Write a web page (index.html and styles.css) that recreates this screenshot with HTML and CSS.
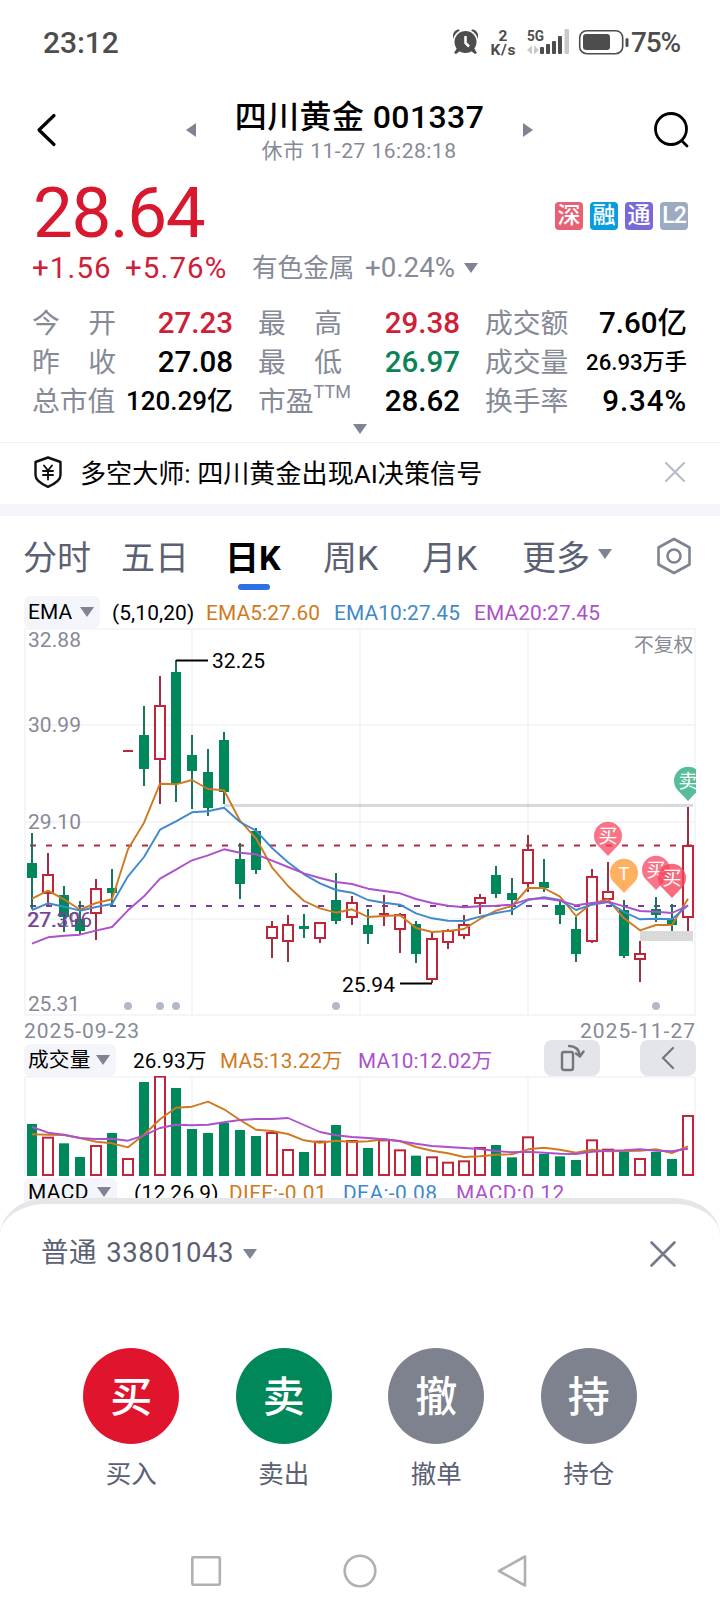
FILE: index.html
```html
<!DOCTYPE html>
<html lang="zh-CN">
<head>
<meta charset="utf-8">
<meta name="viewport" content="width=device-width, initial-scale=1">
<title>四川黄金 001337</title>
<link rel="stylesheet" href="styles.css">
</head>
<body>

<div class="status">
  <span class="clock">23:12</span>
  <svg class="status-icons" width="190" height="40" viewBox="446 22 190 40">
    <g fill="#4d4d4d">
      <circle cx="465.500" cy="42" r="11"/>
      <path d="M453 39a14 14 0 0 1 7-8.500l-2-1.300q-5 2-5 6zM478 39a14 14 0 0 0-7-8.500l2-1.300q5 2 5 6z"/>
      <path d="M457 48l-3 5 2 1 4-3zM474 48l3 5-2 1-4-3z"/>
      <text class="net" x="503" y="40.500" text-anchor="middle">2</text>
      <text class="net" x="503" y="55" text-anchor="middle" textLength="25">K/s</text>
      <text class="net" x="527" y="41" textLength="17" lengthAdjust="spacingAndGlyphs">5G</text>
      <rect x="540" y="47" width="4" height="7" rx="1"/>
      <rect x="546" y="44" width="4" height="10" rx="1"/>
      <rect x="552" y="41" width="4" height="13" rx="1"/>
      <rect x="558" y="36" width="4" height="18" rx="1"/>
      <rect x="583" y="34" width="27" height="16" rx="3"/>
      <rect x="625.500" y="38" width="3" height="9" rx="1.500"/>
    </g>
    <path d="M465.500 36v7l3.500 3.500" fill="none" stroke="#fff" stroke-width="2.500"/>
    <g fill="#c9c9c9">
      <rect x="564.500" y="29" width="4.500" height="25" rx="1"/>
      <path d="M527 50l5-4.500v9zM534 45.500l5 4.500-5 4.500z"/>
    </g>
    <rect x="579.700" y="30.700" width="43" height="23" rx="7" fill="none" stroke="#4d4d4d" stroke-width="1.600"/>
  </svg>
  <span class="battery">75%</span>
</div>

<div class="header">
  <svg class="back" width="24" height="36" viewBox="0 0 24 36"><path d="M19 3.500L4 18l15 14.500" fill="none" stroke="#000" stroke-width="3.200" stroke-linecap="round" stroke-linejoin="round"/></svg>
  <svg class="prev" width="10" height="14"><path d="M10 0v14L0 7z" fill="#7f8492"/></svg>
  <div class="title">
    <h1>四川黄金 001337</h1>
    <p>休市 11-27 16:28:18</p>
  </div>
  <svg class="next" width="10" height="14"><path d="M0 0v14l10-7z" fill="#7f8492"/></svg>
  <svg class="search" width="38" height="38" viewBox="0 0 38 38"><g fill="none" stroke="#000" stroke-width="2.800" stroke-linecap="round"><circle cx="18" cy="18" r="15.500"/><path d="M29 30l5 5"/></g></svg>
</div>

<div class="price-row">
  <span class="price">28.64</span>
  <div class="tags">
    <span class="tag sz">深</span>
    <span class="tag rong">融</span>
    <span class="tag tong">通</span>
    <span class="tag l2">L2</span>
  </div>
</div>

<div class="change-row">
  <span class="red">+1.56</span>
  <span class="red">+5.76%</span>
  <span class="sector">有色金属</span>
  <span class="sector-pct">+0.24%</span>
  <i class="arrow"></i>
</div>

<div class="stats">
  <span class="label"><b>今</b><b>开</b></span><span class="val red">27.23</span>
  <span class="label"><b>最</b><b>高</b></span><span class="val red">29.38</span>
  <span class="label">成交额</span><span class="val">7.60亿</span>

  <span class="label"><b>昨</b><b>收</b></span><span class="val">27.08</span>
  <span class="label"><b>最</b><b>低</b></span><span class="val green">26.97</span>
  <span class="label">成交量</span><span class="val small">26.93万手</span>

  <span class="label">总市值</span><span class="val mid">120.29亿</span>
  <span class="label ttm">市盈<sup>TTM</sup></span><span class="val">28.62</span>
  <span class="label">换手率</span><span class="val pct">9.34%</span>
</div>
<div class="more"><i class="arrow"></i></div>

<div class="notice">
  <svg width="30" height="34" viewBox="0 0 30 34"><g fill="none" stroke="#111" stroke-linecap="round" stroke-linejoin="round"><path d="M15 2.500L27.500 7v13c0 5-6 9-12.500 11.800C8.500 29 2.500 25 2.500 20V7z" stroke-width="2.400"/><path d="M11 10.500l4 5 4-5M10 16h10M10 20h10M15 16v8.500" stroke-width="1.900"/></g></svg>
  <span>多空大师: 四川黄金出现AI决策信号</span>
  <svg width="22" height="22" viewBox="0 0 22 22"><path d="M2 2l18 18M20 2L2 20" stroke="#b7bcc9" stroke-width="2.200" stroke-linecap="round"/></svg>
</div>

<div class="tabs">
  <span>分时</span>
  <span>五日</span>
  <span class="active">日K</span>
  <span>周K</span>
  <span>月K</span>
  <span>更多</span>
  <i class="arrow"></i>
  <svg width="36" height="38" viewBox="0 0 36 38"><g fill="none" stroke="#7f8492" stroke-width="2.600" stroke-linejoin="round"><path d="M18 2l15.500 8.500v17L18 36 2.500 27.500v-17z"/><circle cx="18" cy="19" r="6.500"/></g></svg>
</div>

<div class="legend ema">
  <span class="pill">EMA<i class="arrow"></i></span>
  <span>(5,10,20)</span>
  <span class="orange">EMA5:27.60</span>
  <span class="blue">EMA10:27.45</span>
  <span class="purple">EMA20:27.45</span>
</div>
<svg id="kline" width="720" height="388" viewBox="0 628 720 388"></svg>
<div class="dates"><span>2025-09-23</span><span>2025-11-27</span></div>

<div class="legend vol">
  <span class="pill">成交量<i class="arrow"></i></span>
  <span>26.93万</span>
  <span class="orange">MA5:13.22万</span>
  <span class="purple">MA10:12.02万</span>
  <span class="btn"><svg width="26" height="28" viewBox="0 0 26 28"><g fill="none" stroke="#74767c" stroke-width="2.400" stroke-linecap="round" stroke-linejoin="round"><rect x="3" y="8" width="11" height="18" rx="2"/><path d="M10 2c6 0 10 3 11 10M17 9.500l4 3 3.500-5"/></g></svg></span>
  <span class="btn"><svg width="14" height="24" viewBox="0 0 14 24"><path d="M12 2L2 12l10 10" fill="none" stroke="#74767c" stroke-width="2.200" stroke-linecap="round"/></svg></span>
</div>
<svg id="volume" width="720" height="100" viewBox="0 1076 720 100"></svg>

<div class="legend macd">
  <span class="pill">MACD<i class="arrow"></i></span>
  <span>(12,26,9)</span>
  <span class="orange">DIFF:-0.01</span>
  <span class="blue">DEA:-0.08</span>
  <span class="purple">MACD:0.12</span>
</div>

<div class="sheet">
  <div class="account">
    <span>普通 33801043</span>
    <i class="arrow"></i>
    <svg width="28" height="28" viewBox="0 0 28 28"><path d="M2.500 2.500l23 23M25.500 2.500l-23 23" stroke="#74798a" stroke-width="2.600" stroke-linecap="round"/></svg>
  </div>
  <div class="actions">
    <div><span class="round buy">买</span>买入</div>
    <div><span class="round sell">卖</span>卖出</div>
    <div><span class="round">撤</span>撤单</div>
    <div><span class="round">持</span>持仓</div>
  </div>
  <svg class="nav" width="720" height="40" viewBox="0 1551 720 40">
    <g fill="none" stroke="#b0b0b0" stroke-width="2.600" stroke-linejoin="round">
      <rect x="192.300" y="1557.300" width="27.500" height="27.500" rx="1"/>
      <circle cx="360" cy="1571" r="15.300"/>
      <path d="M525 1556.500v29l-26-14.500z"/>
    </g>
  </svg>
</div>

<script src="chart.js"></script>
</body>
</html>
```

FILE: styles.css
```css
* { box-sizing: border-box; margin: 0; padding: 0; }

body {
  width: 720px; height: 1610px; overflow: hidden;
  display: flex; flex-direction: column;
  background: #fff; color: #000;
  font-family: Roboto, "Noto Sans CJK SC", sans-serif;
}
body > * { flex: none; }
svg { display: block; }
h1, b { font-weight: inherit; }

.red { color: #cf2037; }
.green { color: #0b8358; }
.orange { color: #cf7a20; }
.blue { color: #4089cc; }
.purple { color: #ad50cc; }

.arrow {
  display: block; width: 14px; height: 10px;
  background: #7f8492; clip-path: polygon(0 0, 100% 0, 50% 100%);
}

/* status bar */
.status { display: flex; align-items: center; height: 84px; padding-left: 43px; color: #4d4d4d; font-weight: 500; }
.clock { width: 403px; font-size: 30px; letter-spacing: -.1px; }
.status-icons { margin-right: -5px; }
.battery { font-size: 28px; letter-spacing: -1.2px; }
.net { font: 700 15.500px Roboto, sans-serif; }

/* header */
.header { display: grid; grid-template-columns: 151px 10px 327px 130px 38px; align-items: center; height: 92px; padding-left: 35px; }
.title { text-align: center; }
.title h1 { font-size: 32px; line-height: 40px; font-weight: 500; letter-spacing: .4px; padding-top: 2px; }
.title p { font-size: 21px; line-height: 29px; color: #868a97; letter-spacing: .5px; margin-left: -1px; }

/* price */
.price-row { display: flex; justify-content: space-between; height: 72px; padding: 0 32px 0 33px; align-items: center; }
.price { font-size: 71px; line-height: 72px; letter-spacing: -1.4px; padding-top: 2px; color: #d8182e; }
.tags { display: flex; gap: 7px; margin-top: 8px; }
.tag { width: 28px; height: 28px; border-radius: 4px; color: #fff; font-size: 23px; line-height: 28px; text-align: center; font-weight: 500; }
.sz { background: #e95f74; }
.rong { background: #0b9ddb; }
.tong { background: #7869d8; }
.l2 { background: #9cabc2; letter-spacing: -1px; }

.change-row { display: grid; grid-template-columns: 93px 127px 113px 99px 14px; align-items: center; height: 40px; padding-left: 32px; font-size: 29.500px; line-height: 40px; letter-spacing: 1.1px; white-space: nowrap; }
.change-row .sector { font-size: 25.600px; letter-spacing: 0; color: #868a97; }
.change-row .sector-pct { font-size: 27.700px; letter-spacing: 0; color: #868a97; }

/* quote table: label, value, gap */
.stats {
  display: grid; grid-template-columns: 84px 117px 25px 84px 118px 25px 84px 118px;
  grid-template-rows: repeat(3, 39px); padding-left: 32px; margin-top: 16px;
  line-height: 39px; white-space: nowrap;
}
.stats > :nth-child(6n+3) { grid-column: 4; }
.stats > :nth-child(6n+5) { grid-column: 7; }
.label { display: flex; justify-content: space-between; font-size: 27.800px; color: #868a97; }
.label.ttm { justify-content: flex-start; }
.label sup { font-size: 18px; line-height: 18px; margin-top: 1px; }
.val { text-align: right; font-size: 29.500px; font-weight: 500; }
.val.mid { font-size: 26px; }
.val.small { font-size: 22.200px; }
.val.pct { letter-spacing: .9px; }
.more { height: 21px; padding: 3px 0 0 353px; }

/* notice */
.notice { display: grid; grid-template-columns: 47px 584px 22px; align-items: center; height: 74px; padding: 0 0 3px 33px; border-top: 1px solid #f0f1f4; border-bottom: 12px solid #f4f5fa; font-size: 26.100px; }

/* period tabs */
.tabs { display: grid; grid-template-columns: 98px 104px 98px 99px 100px 76px 58px 36px; align-items: center; height: 80px; padding: 4px 0 0 23px; color: #5b6173; font-size: 34px; line-height: 40px; white-space: nowrap; }
.tabs .active { position: relative; color: #000; font-weight: 700; }
.tabs .active::after { content: ""; position: absolute; left: 13px; top: 46px; width: 32px; height: 6px; border-radius: 3px; background: #2f6fe4; }
.tabs .arrow { margin-top: -8px; }
.tabs svg { margin-top: -5px; }

/* indicator rows */
.legend { display: grid; align-items: end; height: 32px; padding-left: 24px; font-size: 20.900px; line-height: 34px; white-space: nowrap; }
.legend > span { height: 32px; }
.pill { display: flex; align-items: center; justify-content: space-between; padding: 0 6px 0 4px; border-radius: 6px; background: #f4f5fa; }
.legend > :nth-child(2) { padding-left: 17px; }
.ema { grid-template-columns: 76px 106px 128px 140px 140px; letter-spacing: .1px; }
.ema > :nth-child(2) { padding-left: 12px; }
.vol { grid-template-columns: 92px 104px 138px 186px 96px 56px; height: 36px; font-size: 20.700px; letter-spacing: .15px; }
.macd { grid-template-columns: 93px 112px 114px 113px 120px; margin-top: 2px; line-height: 30px; letter-spacing: .4px; }
.macd .pill { padding-bottom: 4px; }
.legend .btn { display: flex; align-items: center; justify-content: center; width: 56px; height: 36px; border-radius: 8px; background: #e4e5ea; }

.dates { display: flex; justify-content: space-between; height: 24px; padding: 2px 24px 0 24px; font-size: 21px; line-height: 26px; letter-spacing: 1px; color: #868a97; }

/* chart */
.grid { stroke: #f4f5f9; stroke-width: 2; fill: none; }
.up { stroke: #c22439; fill: #fff; }
.wick-up { stroke: #9c2f40; stroke-width: 2; }
.down { fill: #00875a; }
.wick-down { stroke: #17765a; stroke-width: 2; }
.line { fill: none; stroke-width: 1.900; stroke-linejoin: round; }
.axis { font-size: 21px; fill: #868a97; }
.axis.adj { font-size: 19.800px; }
.axis.level { fill: #7a3a9c; }
.mark { font-size: 21px; fill: #000; }
.pin { font-size: 19px; fill: #fff; text-anchor: middle; }

/* trade sheet */
.sheet { position: relative; flex: 1; margin-top: -12px; background: #fff; border-top: 6px solid #e5e6ea; border-radius: 46px 46px 0 0 / 38px 38px 0 0; }
.account { display: grid; grid-template-columns: 202px 406px 28px; align-items: center; height: 100px; padding-left: 41px; font-size: 27.500px; line-height: 34px; letter-spacing: .5px; word-spacing: 2px; color: #5b6173; }
.account span { margin-top: -2px; }
.actions { display: grid; grid-template-columns: repeat(4, 152.500px); padding: 44px 0 0 55px; }
.actions div { display: flex; flex-direction: column; align-items: center; font-size: 25.500px; line-height: 36px; color: #5b6173; }
.round { width: 96px; height: 96px; margin-bottom: 12px; border-radius: 50%; background: #7e828e; color: #fff; font-size: 42px; line-height: 99px; font-weight: 500; text-align: center; }
.buy { background: #e0142d; }
.sell { background: #00875a; }
.nav { margin-top: 59px; }
```

FILE: chart.js
```javascript
// one row per day: up?, high, low, body top, body bottom (screen y)
var candles = [
  [0, 833, 909, 863, 878], [1, 853, 906, 874, 894], [0, 886, 932, 895, 917], [0, 901, 934, 919, 931],
  [1, 879, 940, 888, 914], [0, 869, 907, 888, 893], [1, 751, 751, 750, 752], [0, 706, 786, 735, 769],
  [1, 676, 804, 705, 760], [0, 660, 802, 672, 784], [0, 735, 809, 755, 771], [0, 749, 816, 772, 808],
  [0, 732, 804, 740, 792], [0, 843, 899, 859, 884], [0, 828, 874, 831, 870], [1, 921, 958, 926, 939],
  [1, 915, 962, 924, 942], [0, 914, 938, 926, 929], [1, 922, 943, 922, 939], [0, 873, 924, 900, 921],
  [1, 896, 925, 902, 918], [0, 909, 944, 925, 934], [1, 895, 926, 913, 915], [1, 913, 953, 914, 930],
  [0, 921, 963, 924, 954], [1, 932, 983, 938, 980], [1, 929, 949, 930, 943], [1, 915, 939, 924, 936],
  [1, 894, 914, 897, 904], [0, 866, 898, 875, 894], [0, 878, 915, 893, 900], [1, 835, 892, 849, 884],
  [0, 859, 892, 882, 888], [0, 900, 924, 905, 915], [0, 917, 962, 929, 954], [1, 869, 943, 876, 942],
  [1, 862, 900, 891, 900], [0, 900, 958, 910, 956], [1, 941, 982, 953, 960], [0, 897, 922, 909, 915],
  [0, 904, 931, 919, 925], [1, 807, 931, 845, 918]
];

// averages and volumes are kept in thirds of a pixel
var ema5 = [836,812,838,869,849,838,688,608,491,493,480,507,511,602,655,742,798,843,865,878,868,891,888,886,924,936,933,927,897,872,858,804,804,830,888,850,838,895,931,915,915,836];
var ema10 = [870,850,860,872,861,852,769,711,629,604,577,574,563,606,632,684,727,763,790,810,818,840,848,854,880,895,902,903,890,879,871,840,832,840,870,854,846,876,898,896,898,856];
var ema20 = [971,952,947,944,932,921,871,829,776,749,721,706,688,698,703,722,741,760,774,786,792,806,813,820,837,849,857,862,859,857,854,838,835,842,856,849,845,859,873,875,879,857];
var vols = [342,380,400,441,405,369,444,216,197,234,357,369,339,360,378,366,417,426,392,345,390,414,388,418,437,439,455,451,411,405,442,379,432,439,450,388,416,426,444,426,447,315];
var ma5 = [373,374,375,384,395,400,412,374,328,293,290,275,298,330,359,363,372,391,398,392,396,394,388,393,411,422,430,441,439,434,433,418,413,419,428,419,424,423,422,418,429,409];
var ma10 = [351,368,374,384,387,386,392,376,354,344,346,344,337,330,327,327,324,345,366,376,381,384,388,394,401,408,411,414,417,423,427,425,428,431,432,425,422,421,418,422,424,416];

function px(i) { return 32 + 16 * i; }

function bar(i, up, top, bottom) {
  var x = px(i);
  if (!up) return '<rect class="down" x="' + (x - 5) + '" y="' + top + '" width="10" height="' + (bottom - top) + '"/>';
  if (bottom - top < 3) return '<rect fill="#c22439" x="' + (x - 5) + '" y="' + top + '" width="10" height="2"/>';
  return '<rect class="up" stroke-width="2" x="' + (x - 5) + '" y="' + (top + 1) + '" width="10" height="' + (bottom - top - 2) + '"/>';
}

function line(data, base, color) {
  var pts = data.map(function (v, i) { return px(i) + ',' + (base + v / 3).toFixed(1); }).join(' ');
  return '<polyline class="line" stroke="' + color + '" points="' + pts + '"/>';
}

function text(cls, x, y, s, len) {
  return '<text class="' + cls + '" x="' + x + '" y="' + y + '"' + (len ? ' textLength="' + len + '"' : '') + '>' + s + '</text>';
}

function pin(x, top, s, color) {
  return '<path fill="' + color + '" d="M' + x + ' ' + (top + 34) + 'L' + (x - 10.5) + ' ' + (top + 23) +
    'A14 14 0 1 1 ' + (x + 10.5) + ' ' + (top + 23) + 'Z"/>' + text('pin', x, top + 21, s);
}

var k = '<path class="grid" d="M25 629H695V1015H25ZM25 725H695M25 822H695M25 919H695M192 629V1015M360 629V1015M528 629V1015"/>';
k += text('axis', 28, 647, '32.88', 53) + text('axis', 28, 732, '30.99', 53) + text('axis', 28, 829, '29.10', 53) +
  text('axis', 28, 927, '27.20', 53) + text('axis', 28, 1011, '25.31', 52);
k += text('axis adj', 634, 652, '不复权');
k += '<path d="M30 845.5H694" stroke="#b8283c" stroke-width="2" stroke-dasharray="6 10"/>';
k += '<path d="M30 906H694" stroke="#7a3a9c" stroke-width="2" stroke-dasharray="6 10"/>';
candles.forEach(function (c, i) {
  if (c[2] > c[1]) k += '<path class="' + (c[0] ? 'wick-up' : 'wick-down') + '" d="M' + px(i) + ' ' + c[1] + 'V' + c[2] + '"/>';
  k += bar(i, c[0], c[3], c[4]);
});
k += '<rect x="224" y="804" width="469" height="3" fill="#000" opacity=".15"/><rect x="640" y="931" width="53" height="10" fill="#d9d9d9"/>';
k += line(ema5, 620, '#cf7a20') + line(ema10, 620, '#4089cc') + line(ema20, 620, '#ad50cc');
k += text('axis level', 27, 927, '27.396', 65);
k += '<path d="M176 660.5H208M400 983.5H432" stroke="#000" stroke-width="2"/>';
k += text('mark', 212, 668, '32.25', 53) + text('mark', 342, 992, '25.94', 53);
[128, 160, 176, 336, 656].forEach(function (x) { k += '<circle cx="' + x + '" cy="1006" r="4" fill="#b3b9c6"/>'; });
k += pin(608, 822, '买', 'rgba(246,70,93,.75)') + pin(624, 859, 'T', '#ffb060') +
  pin(656, 856, '买', 'rgba(246,70,93,.75)') + pin(672, 864, '买', 'rgba(246,70,93,.8)');
k += '<clipPath id="edge"><rect x="600" y="700" width="96" height="200"/></clipPath><g clip-path="url(#edge)">' + pin(688, 767, '卖', '#57bd99') + '</g>';
document.getElementById('kline').innerHTML = k;

var v = '<path class="grid" d="M25 1077H695M25 1077V1176M695 1077V1176M192 1077V1176M360 1077V1176M528 1077V1176"/>';
vols.forEach(function (top, i) { v += bar(i, candles[i][0], 1010 + top / 3, 1176); });
v += line(ma5, 1010, '#cf7a20') + line(ma10, 1010, '#ad50cc');
document.getElementById('volume').innerHTML = v;
```
